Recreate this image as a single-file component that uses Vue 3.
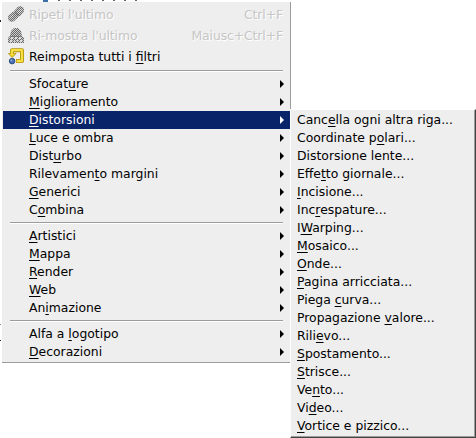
<script setup>
import { h } from 'vue'

const quick = [
  { icon: 'repeat', text: 'Ripeti l\'ultimo', key: 'Ctrl+F', off: true },
  { icon: 'show', text: 'Ri-mostra l\'ultimo', key: 'Maiusc+Ctrl+F', off: true },
  { icon: 'reset', text: 'Reimposta tutti i _filtri', key: '', off: false }
]
const groups = [
  ['Sfocat_ure', '_Miglioramento', '_Distorsioni', '_Luce e ombra', 'Dist_urbo', 'Rilevamen_to margini', '_Generici', 'C_ombina'],
  ['_Artistici', '_Mappa', '_Render', '_Web', 'An_imazione'],
  ['Alfa a _logotipo', '_Decorazioni']
]
const sub = [
  'Canc_ella ogni altra riga...', 'Coordinate p_olari...', 'Distorsione lente...', 'Effe_tto giornale...',
  '_Incisione...', 'Inc_respature...', 'I_Warping...', '_Mosaico...', '_Onde...', '_Pagina arricciata...',
  'Piega _curva...', 'Propagazione _valore...', 'Rili_evo...', '_Spostamento...', '_Strisce...',
  'Ve_nto...', 'Vi_deo...', '_Vortice e pizzico...'
]
const open = '_Distorsioni'

// one-pixel checkerboard, the stipple of insensitive icons
let stipple = ''
for (let y = 0; y < 17; y++) {
  for (let x = y % 2; x < 17; x += 2) stipple += `M${x} ${y}h1v1h-1z`
}

const Label = ({ text }) => {
  const i = text.indexOf('_')
  if (i < 0) return h('span', text)
  return h('span', [text.slice(0, i), h('u', { class: 'mnemonic' }, text[i + 1]), text.slice(i + 2)])
}
Label.props = ['text']
</script>

<template>
  <div class="screen">
    <div class="under">
      <i class="bit b1"></i><i class="bit b2"></i><i class="bit b3"></i><i class="bit b4"></i><i class="bit b5"></i>
    </div>
    <div class="menu main">
      <div v-for="q in quick" :key="q.text" class="row tall" :class="{ off: q.off }">
        <svg class="icon" width="17" height="17" viewBox="0 0 17 17">
          <g v-if="q.icon === 'repeat'">
            <clipPath id="chain"><circle cx="4" cy="11.8" r="4" /><circle cx="6.5" cy="9.5" r="4" /><circle cx="10" cy="6.5" r="4" /><circle cx="12" cy="4.2" r="4" /></clipPath>
            <g clip-path="url(#chain)">
              <rect width="17" height="17" fill="#c8c8c8" />
              <path d="M1.5 12.5 L5 9 M10 7 L14 3" stroke="#eee" stroke-width="2" />
              <path :d="stipple" fill="#686868" />
              <path d="M7 5.5 L10.5 9.5" stroke="#666" opacity=".6" />
            </g>
          </g>
          <g v-else-if="q.icon === 'show'">
            <clipPath id="mask"><path d="M0 16 V11 L2 9 L3 4 L6 1 H10 L13 4 L14 9 L16 11 V16Z" /></clipPath>
            <g clip-path="url(#mask)">
              <rect width="17" height="17" fill="#ccc" />
              <path :d="stipple" fill="#686868" />
              <path d="M3 10 h2 v2 h-2z M7 10 h2 v2 h-2z M11 10 h2 v2 h-2z M2 13 h2 v2 h-2z M6 13 h1 v2 h-1z M9 13 h1 v2 h-1z M12 13 h2 v2 h-2z" fill="#eee" opacity=".8" />
              <path d="M2 9.5 H14" stroke="#666" opacity=".6" />
            </g>
          </g>
          <g v-else>
            <path d="M4 7 V2.2 H14 V13 H8" fill="none" stroke="#b3920b" stroke-width="4" stroke-linejoin="round" />
            <path d="M.4 5.5 H8 L4.2 9.6Z" fill="#f0d630" stroke="#b3920b" stroke-width=".8" />
            <path d="M4 7 V2.2 H14 V13 H8.6" fill="none" stroke="#f6df42" stroke-width="2.3" stroke-linejoin="round" />
            <circle cx="4.1" cy="13.1" r="2.8" fill="#4a71ad" stroke="#274878" stroke-width=".9" />
            <circle cx="3.4" cy="12.3" r="1" fill="#8babd6" />
          </g>
        </svg>
        <Label class="label" :text="q.text" />
        <span class="key">{{ q.key }}</span>
      </div>
      <template v-for="(g, n) in groups" :key="n">
        <div class="sep"></div>
        <div v-for="t in g" :key="t" class="row" :class="{ active: t === open }">
          <Label class="label" :text="t" />
          <svg class="arrow" width="4" height="8" viewBox="0 0 4 8"><path d="M0 0 L4 4 L0 8Z" fill="currentColor" /></svg>
        </div>
      </template>
    </div>
    <div class="menu sub">
      <div v-for="t in sub" :key="t" class="row"><Label class="label" :text="t" /></div>
    </div>
  </div>
</template>

<style>
body { background: #fff; overflow: hidden; }
</style>
<style scoped>
.screen {
  position: relative;
  width: 476px;
  height: 438px;
  overflow: hidden;
  background: #fff;
  color: #000;
  font: 12.4px/18px "DejaVu Sans", sans-serif;
}
.bit { position: absolute; background: #222; }
.b1 { left: 0; top: 20px; width: 1px; height: 2px; }
.b2 { left: 0; top: 324px; width: 1px; height: 1px; background: #888; }
.b3 { left: 0; top: 340px; width: 1px; height: 1px; }
.b4 { left: 43px; top: 0; width: 5px; height: 2px; background: #3a70a8; }
.b5 { left: 58px; top: 0; width: 84px; height: 1px; background: repeating-linear-gradient(90deg, #666 0 2px, #fff 2px 11px); }
.menu { position: absolute; box-sizing: border-box; background: #eee; }
.main {
  left: 2px;
  top: 2px;
  width: 289px;
  height: 361px;
  padding: 2px 0 0 1px;
  border-right: 1px solid #9c9c9c;
  border-bottom: 1px solid #9c9c9c;
}
.sub {
  left: 290px;
  top: 109px;
  width: 186px;
  height: 329px;
  padding: 1px 0 0 6px;
  border-top: 1px solid #fff;
  border-left: 1px solid #fff;
  border-right: 1px solid #444;
  border-bottom: 1px solid #444;
  box-shadow: inset -1px -1px #9c9c9c;
}
.row { display: flex; align-items: center; height: 18px; white-space: pre; }
.main .row { padding: 0 6px 0 26px; }
.main .tall { height: 21px; padding: 0 7px 0 5px; }
.icon { flex: none; margin-right: 4px; }
.label { flex: 1; }
.row :deep(.mnemonic) { text-decoration: underline; text-decoration-thickness: 1px; text-underline-offset: 2px; text-decoration-skip-ink: none; }
.off { color: #c6c6c6; text-shadow: 1px 1px #fff; letter-spacing: -0.1px; }
.active { background: #0a246a; color: #fff; }
.sep { height: 1px; margin: 3px 7px; border-top: 1px solid #9c9c9c; background: #fff; }
</style>
